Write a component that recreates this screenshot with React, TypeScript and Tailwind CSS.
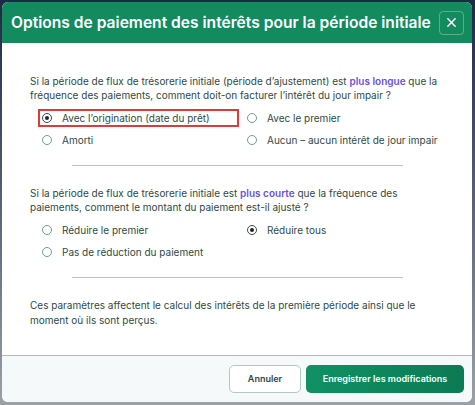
import { useState } from 'react';

const firstOptions = [
  { value: 'origination', label: 'Avec l\u2019origination (date du prêt)' },
  { value: 'premier', label: 'Avec le premier' },
  { value: 'amorti', label: 'Amorti' },
  { value: 'aucun', label: 'Aucun – aucun intérêt de jour impair' },
];

const secondOptions = [
  { value: 'reduire_premier', label: 'Réduire le premier' },
  { value: 'reduire_tous', label: 'Réduire tous' },
  { value: 'pas_reduction', label: 'Pas de réduction du paiement' },
];

function Radio({
  label,
  checked,
  highlight,
  onSelect,
}: {
  label: string;
  checked: boolean;
  highlight?: boolean;
  onSelect: () => void;
}) {
  return (
    <button
      type="button"
      onClick={onSelect}
      className={`flex h-[18px] items-center gap-[10px] border-2 pl-[2px] text-left ${
        highlight ? 'border-[#e0393a]' : 'border-transparent'
      }`}
    >
      <span
        className={`flex h-[10px] w-[10px] shrink-0 items-center justify-center rounded-full border ${
          checked ? 'border-[#3d4a47]' : 'border-[#6f9d8e]'
        }`}
      >
        {checked && <span className="h-[4px] w-[4px] rounded-full bg-[#1c2624]" />}
      </span>
      <span className="text-[10px] leading-none text-[#2e4a43]">{label}</span>
    </button>
  );
}

export default function App() {
  const [first, setFirst] = useState('origination');
  const [second, setSecond] = useState('reduire_tous');

  return (
    <div
      className="h-[405px] w-[475px] bg-gradient-to-b from-[#1e2a45] to-[#9ca1a8] pb-[3px] pl-[2px] pr-[3px] pt-[2px]"
      style={{ fontFamily: 'Inter, "Noto Sans", sans-serif' }}
    >
      <div className="flex h-full flex-col overflow-hidden rounded-[6px] bg-white">
        {/* En-tête */}
        <div className="flex h-[41px] shrink-0 items-center justify-between bg-[#138b5f] pl-[9px] pr-[8px]">
          <h1 className="whitespace-nowrap text-[15.6px] font-semibold leading-none text-white">
            Options de paiement des intérêts pour la période initiale
          </h1>
          <button
            type="button"
            className="flex h-[24px] w-[25px] shrink-0 items-center justify-center rounded-[4px] border border-white/30"
          >
            <svg width="11" height="11" viewBox="0 0 12 12" fill="none" stroke="white" strokeWidth="1.6" strokeLinecap="round">
              <path d="M2 2 L10 10 M10 2 L2 10" />
            </svg>
          </button>
        </div>

        {/* Contenu */}
        <div className="flex-1 px-[28px] pt-[31px]">
          <p className="text-[10px] leading-[14px] text-[#2e4a43]">
            Si la période de flux de trésorerie initiale (période d’ajustement) est{' '}
            <span className="font-semibold text-[#6b4fdc]">plus longue</span> que la fréquence des paiements, comment
            doit-on facturer l’intérêt du jour impair ?
          </p>
          <div className="mt-[7px] grid grid-cols-2 gap-x-[4px] gap-y-[4px] pl-[8px]">
            {firstOptions.map(o => (
              <Radio
                key={o.value}
                label={o.label}
                checked={first === o.value}
                highlight={o.value === 'origination'}
                onSelect={() => setFirst(o.value)}
              />
            ))}
          </div>
          <div className="mx-auto mt-[16px] h-px w-[331px] bg-[#b7c7c1]" />

          <p className="mt-[20px] text-[10px] leading-[14px] text-[#2e4a43]">
            Si la période de flux de trésorerie initiale est{' '}
            <span className="font-semibold text-[#6b4fdc]">plus courte</span> que la fréquence des paiements, comment le
            montant du paiement est-il ajusté ?
          </p>
          <div className="mt-[7px] grid grid-cols-2 gap-x-[4px] gap-y-[4px] pl-[8px]">
            {secondOptions.map(o => (
              <Radio
                key={o.value}
                label={o.label}
                checked={second === o.value}
                onSelect={() => setSecond(o.value)}
              />
            ))}
          </div>
          <div className="mx-auto mt-[16px] h-px w-[331px] bg-[#b7c7c1]" />

          <p className="mt-[20px] text-[10px] leading-[15px] text-[#2e4a43]">
            Ces paramètres affectent le calcul des intérêts de la première période ainsi que le moment où ils sont
            perçus.
          </p>
        </div>

        {/* Pied */}
        <div className="flex h-[47px] shrink-0 items-center justify-end gap-[5px] border-t border-[#a9bdb6] bg-[#f6f9fa] pr-[8px]">
          <button
            type="button"
            className="h-[28px] w-[72px] rounded-[5px] border border-[#b4c7c1] bg-white text-[9px] font-semibold text-[#2e4a43]"
          >
            Annuler
          </button>
          <button
            type="button"
            className="h-[28px] w-[158px] rounded-[5px] bg-gradient-to-r from-[#109164] to-[#0c7a54] text-[9px] font-semibold text-white"
          >
            Enregistrer les modifications
          </button>
        </div>
      </div>
    </div>
  );
}
